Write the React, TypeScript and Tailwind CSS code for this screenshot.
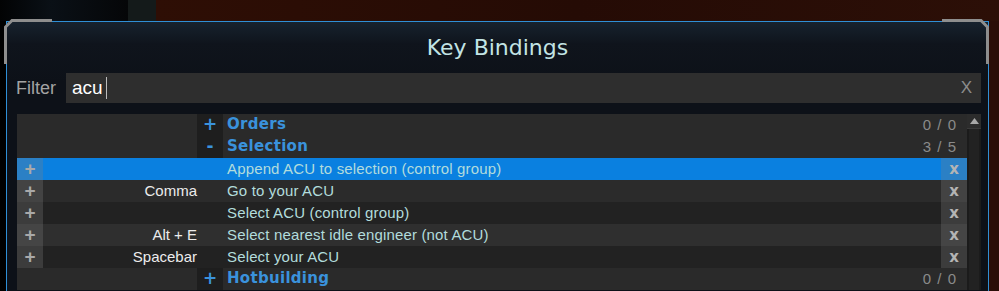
import React from "react";

type Binding = { key: string; desc: string; selected?: boolean; bg: string };

const SANS = "font-['Liberation_Sans',Arial,sans-serif]";
const HEAD = "font-['DejaVu_Sans',Verdana,sans-serif]";

const bindings: Binding[] = [
  { key: "", desc: "Append ACU to selection (control group)", selected: true, bg: "bg-[#0a80e0]" },
  { key: "Comma", desc: "Go to your ACU", bg: "bg-[#2b2b2b]" },
  { key: "", desc: "Select ACU (control group)", bg: "bg-[#222222]" },
  { key: "Alt + E", desc: "Select nearest idle engineer (not ACU)", bg: "bg-[#2f2f2f]" },
  { key: "Spacebar", desc: "Select your ACU", bg: "bg-[#222222]" },
];

function CategoryRow({ sign, name, count }: { sign: string; name: string; count: string }) {
  return (
    <div className="flex h-[22px]">
      <div className="w-[180px] bg-[#2a2a2a]" />
      <div className={`flex w-[26px] items-center justify-center bg-[#1e1e1e] text-[17px] font-bold text-[#3a92dc] ${HEAD}`}>
        {sign}
      </div>
      <div className="flex flex-1 items-center justify-between bg-[#2a2a2a] pl-[4px] pr-[10px]">
        <span className={`-mt-[2px] text-[15px] font-bold leading-none tracking-[0.3px] text-[#3a92dc] ${HEAD}`}>{name}</span>
        <span className={`text-[15px] tracking-[1px] text-[#8a8a8a] ${SANS}`}>{count}</span>
      </div>
    </div>
  );
}

function BindingRow({ b }: { b: Binding }) {
  return (
    <div className={`flex h-[22px] items-stretch ${b.bg}`}>
      <div className={`flex w-[26px] items-center justify-center bg-[rgba(128,128,128,0.28)] text-[19px] font-bold text-[#a9a9a9] ${SANS}`}>
        +
      </div>
      <div className={`flex w-[154px] items-center justify-end text-[15px] text-[#ececec] ${SANS}`}>{b.key}</div>
      <div className="w-[30px]" />
      <div className={`flex flex-1 items-center text-[15px] tracking-[0.15px] text-[#b2dcdc] ${SANS}`}>{b.desc}</div>
      <div className={`flex w-[26px] items-center justify-center bg-[rgba(128,128,128,0.28)] text-[15px] font-bold text-[#b4b4b4] ${HEAD}`}>
        x
      </div>
    </div>
  );
}

function CornerLeft() {
  return (
    <svg className="absolute left-[3px] top-[18px]" width="50" height="48" viewBox="0 0 50 48">
      <path d="M2.5 46 V9 L9 2.5 H49" fill="none" stroke="#8e8e8e" strokeWidth="3" />
    </svg>
  );
}

function CornerRight() {
  return (
    <svg className="absolute left-[941px] top-[18px]" width="50" height="48" viewBox="0 0 50 48">
      <path d="M1 2.5 H40 L46.5 9 V46" fill="none" stroke="#8e8e8e" strokeWidth="3" />
    </svg>
  );
}

export default function App() {
  return (
    <div className="relative flex h-[291px] w-[999px] flex-col overflow-hidden bg-[#290d06]">
      {/* game scene behind the dialog */}
      <div className="flex h-[21px]">
        <div className="w-[128px] bg-[linear-gradient(90deg,#020304,#0a1016_40%,#050608)]" />
        <div className="w-[28px] bg-[#141a1a]" />
        <div className="flex-1 bg-[linear-gradient(90deg,#2e0e05,#250b05_50%,#2c0f07)]" />
      </div>

      <div className="flex flex-1">
        <div className="w-[6px] bg-black" />
        <div className="flex w-[983px] flex-col border-x border-t border-[#2f8fd6] bg-[linear-gradient(180deg,#17222e_0px,#0f141c_22px,#0d1118_60px)]">
          <div className="flex h-[51px] items-center justify-center">
            <span className={`text-[22px] text-[#c2e4e4] ${HEAD}`}>Key Bindings</span>
          </div>

          <div className="flex h-[30px] pr-[7px]">
            <div className={`flex w-[59px] items-center pl-[9px] text-[18px] text-[#a3a3a3] ${SANS}`}>Filter</div>
            <div className="flex flex-1 items-center bg-[#2e2e2e] pl-[6px] pr-[9px]">
              <span className={`text-[19px] text-white ${SANS}`}>acu</span>
              <span className="ml-[3px] h-[22px] w-px bg-[#bbbbbb]" />
              <span className={`ml-auto text-[17px] text-[#8c8c8c] ${SANS}`}>X</span>
            </div>
          </div>

          <div className="ml-[10px] mr-[7px] mt-[11px] flex">
            <div className="w-[950px]">
              <CategoryRow sign="+" name="Orders" count="0 / 0" />
              <CategoryRow sign="-" name="Selection" count="3 / 5" />
              {bindings.map((b, i) => (
                <BindingRow key={i} b={b} />
              ))}
              <CategoryRow sign="+" name="Hotbuilding" count="0 / 0" />
            </div>
            <div className="flex w-[14px] flex-col bg-[#1b1b1b]">
              <div className="flex h-[15px] items-center justify-center border-b border-[#3a3a3a] bg-[#2c2c2c]">
                <svg width="9" height="6" viewBox="0 0 9 6">
                  <path d="M0 6 L4.5 0 L9 6 Z" fill="#a8a8a8" />
                </svg>
              </div>
              <div className="mx-[2px] flex-1 bg-[#222222]" />
            </div>
          </div>
        </div>
        <div className="flex-1 bg-[#2a0d07]" />
      </div>

      <CornerLeft />
      <CornerRight />
    </div>
  );
}
